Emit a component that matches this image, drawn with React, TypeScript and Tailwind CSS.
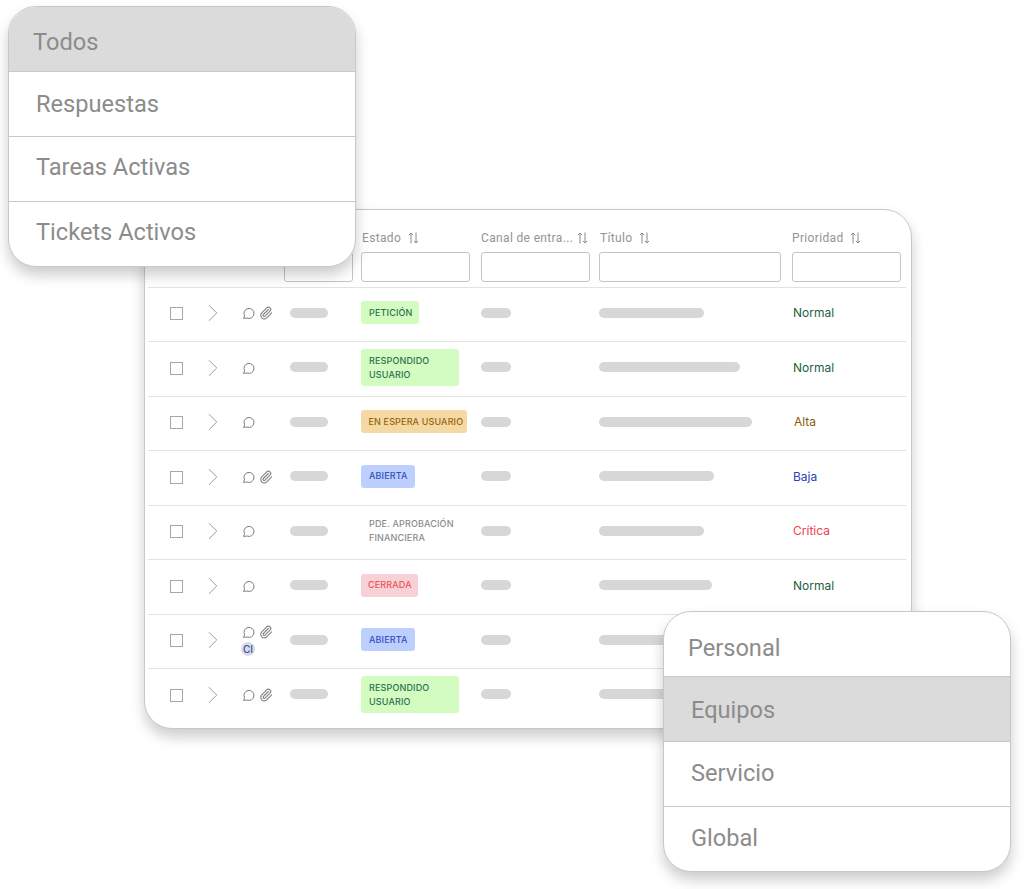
import { ChevronRight, Paperclip } from "lucide-react";
import React from "react";

type Badge = { text: string[]; cls: string; width: string };

const peticion: Badge = { text: ["PETICIÓN"], cls: "bg-[#d3fcc1] text-[#2f6f4f] px-[8px] -mt-[3px]", width: "w-[58px]" };
const respondido: Badge = { text: ["RESPONDIDO", "USUARIO"], cls: "bg-[#d3fcc1] text-[#2f6f4f] px-[8px] -mt-[2px]", width: "w-[98px]" };
const espera: Badge = { text: ["EN ESPERA USUARIO"], cls: "bg-[#f5d9a4] text-[#96650f] px-[7.500px] -mt-[3px]", width: "w-[106px]" };
const abierta: Badge = { text: ["ABIERTA"], cls: "bg-[#bccffd] text-[#3350c0] px-[8px] -mt-[3px]", width: "w-[54px]" };
const pendiente: Badge = { text: ["PDE. APROBACIÓN", "FINANCIERA"], cls: "text-[#8c8c8c] px-[8px] -mt-[2px]", width: "w-[98px]" };
const cerrada: Badge = { text: ["CERRADA"], cls: "bg-[#f6d2d6] text-[#f0525c] px-[7px] -mt-[3px]", width: "w-[57px]" };

const normal = { label: "Normal", cls: "text-[#1d5f41] pl-[1px]" };
const alta = { label: "Alta", cls: "text-[#8a5c06] pl-[2px]" };
const baja = { label: "Baja", cls: "text-[#2b43b5] pl-[1px]" };
const critica = { label: "Crítica", cls: "text-[#f0424c] pl-[1px]" };

const rows = [
  { badge: peticion, clip: true, title: "w-[105px]", prio: normal },
  { badge: respondido, clip: false, title: "w-[141px]", prio: normal },
  { badge: espera, clip: false, title: "w-[153px]", prio: alta },
  { badge: abierta, clip: true, title: "w-[115px]", prio: baja },
  { badge: pendiente, clip: false, title: "w-[105px]", prio: critica },
  { badge: cerrada, clip: false, title: "w-[113px]", prio: normal },
  { badge: abierta, clip: true, ci: true, title: "w-[105px]", prio: normal },
  { badge: respondido, clip: true, title: "w-[105px]", prio: normal },
];

const Bubble = () => (
  <svg viewBox="0 0 14 14" className="h-[14px] w-[14px] shrink-0" fill="none" stroke="#7d7d7d" strokeWidth="1">
    <path d="M1.600 12.400l1-2.600A5 5 0 1 1 5 12a15 15 0 0 1-3.400.400z" strokeLinejoin="round" />
  </svg>
);

const Sort = () => (
  <svg viewBox="0 0 11 12" className="h-[12px] w-[11px] shrink-0" fill="none" stroke="#8a8a8a" strokeWidth="1">
    <path d="M3 11.500V1M.900 3.100L3 1l2.100 2.100M8 .500V11M5.900 8.900L8 11l2.100-2.100" />
  </svg>
);

const FilterInput = ({ className }: { className: string }) => (
  <div className={`h-[30px] rounded-[3px] border border-[#c4c4c4] bg-white ${className}`} />
);

const Header = ({ label, gap }: { label: string; gap: string }) => (
  <div className={`flex items-center text-[12px] tracking-[0.35px] text-[#949494] ${gap}`}>
    <span>{label}</span>
    <Sort />
  </div>
);

const Menu = ({
  items,
  active,
  className,
}: {
  items: { label: string; cls: string }[];
  active: number;
  className: string;
}) => (
  <div
    className={`absolute z-10 w-[348px] overflow-hidden rounded-[28px] border border-[#c8c8c8] bg-white font-['Roboto',sans-serif] text-[23.600px] text-[#8c8c8c] shadow-[0_8px_14px_rgba(0,0,0,0.2)] ${className}`}
  >
    {items.map((item, i) => (
      <div
        key={item.label}
        className={`flex items-center ${item.cls} ${i > 0 ? "border-t border-[#c8c8c8]" : ""} ${i === active ? "bg-[#dbdbdb]" : ""}`}
      >
        {item.label}
      </div>
    ))}
  </div>
);

export default function App() {
  return (
    <div className="relative h-[889px] w-[1026px] overflow-hidden bg-white">
      <Menu
        active={0}
        className="left-[8px] top-[6px]"
        items={[
          { label: "Todos", cls: "h-[64px] pl-[24px] pt-[7px]" },
          { label: "Respuestas", cls: "h-[65px] pl-[27px] pt-[2px]" },
          { label: "Tareas Activas", cls: "h-[65px] pl-[27px] pb-[2px]" },
          { label: "Tickets Activos", cls: "h-[65px] pl-[27px] pb-[3px]" },
        ]}
      />

      <div className="pl-[144px] pt-[209px]">
        <div className="h-[520px] w-[768px] overflow-hidden rounded-[28px] border border-[#c8c8c8] bg-white pl-[3px] font-['Roboto',sans-serif] shadow-[0_8px_14px_rgba(0,0,0,0.2)]">
          <div className="w-[758px] pb-[4.500px] pt-[18px]">
            <div className="grid h-[20px] grid-cols-[214px_119px_119px_192px_114px] items-center">
              <div />
              <Header label="Estado" gap="gap-[7px]" />
              <Header label="Canal de entra..." gap="gap-[4px]" />
              <Header label="Título" gap="gap-[6px]" />
              <Header label="Prioridad" gap="gap-[6px]" />
            </div>
            <div className="mt-[4px] grid grid-cols-[136px_77px_120px_118px_193px_114px]">
              <div />
              <FilterInput className="w-[69px]" />
              <FilterInput className="w-[109px]" />
              <FilterInput className="w-[109px]" />
              <FilterInput className="w-[182px]" />
              <FilterInput className="w-[109px]" />
            </div>
          </div>
          <div className="w-[758px]">
            {rows.map((row, i) => (
              <div
                key={i}
                className="grid h-[54.500px] grid-cols-[22px_38px_34px_48px_71px_120px_118px_193px_114px] items-center border-t border-[#e2e2e2] font-['Inter',sans-serif]"
              >
                <div />
                <div className="-mt-[1px] h-[13px] w-[13px] border-[1.500px] border-[#a8a8a8]" />
                <ChevronRight size={30} strokeWidth={0.8} color="#9a9a9a" className="-ml-[10px] -mt-[2px]" />
                <div className={`flex w-[32px] flex-wrap items-center gap-x-[3px] ${row.ci ? "-mt-[1px]" : "-mt-[2px]"}`}>
                  <Bubble />
                  {row.clip && <Paperclip size={14} strokeWidth={2} color="#858585" />}
                  {row.ci && (
                    <span className="-ml-[1px] mt-[3px] flex h-[14px] w-[14px] items-center justify-center rounded-full bg-[#dcdcdc] text-[10px] font-medium leading-none text-[#3350c0]">
                      CI
                    </span>
                  )}
                </div>
                <div className="-mt-[3px] h-[10px] w-[38px] rounded-full bg-[#d7d7d7]" />
                <div
                  className={`${row.badge.width} ${row.badge.cls} rounded-[3px] py-[4.500px] text-[9px] font-medium leading-[14px] tracking-[0.15px]`}
                >
                  {row.badge.text.map((t) => (
                    <div key={t} className="whitespace-nowrap">
                      {t}
                    </div>
                  ))}
                </div>
                <div className="-mt-[3px] h-[10px] w-[30px] rounded-full bg-[#d7d7d7]" />
                <div className={`-mt-[3px] h-[10px] ${row.title} rounded-full bg-[#d7d7d7]`} />
                <div className={`-mt-[2px] text-[12px] ${row.prio.cls}`}>{row.prio.label}</div>
              </div>
            ))}
          </div>
        </div>
      </div>

      <Menu
        active={1}
        className="left-[663px] top-[611px]"
        items={[
          { label: "Personal", cls: "h-[64px] pl-[24px] pt-[9px]" },
          { label: "Equipos", cls: "h-[65px] pl-[27px] pt-[4px]" },
          { label: "Servicio", cls: "h-[65px] pl-[27px]" },
          { label: "Global", cls: "h-[65px] pl-[27px] pb-[1px]" },
        ]}
      />
    </div>
  );
}
